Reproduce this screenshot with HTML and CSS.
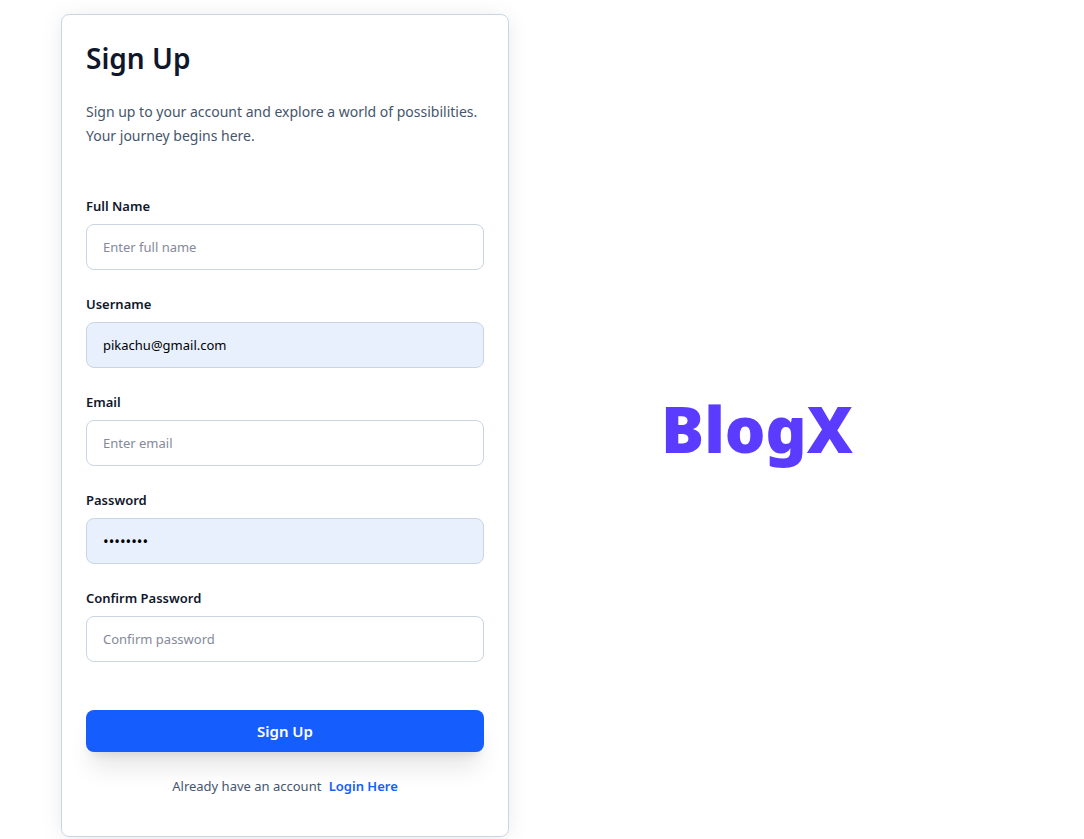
FILE: index.html
```html
<!DOCTYPE html>
<html lang="en">
<head>
<meta charset="utf-8">
<meta name="viewport" content="width=device-width, initial-scale=1">
<title>BlogX – Sign Up</title>
<link rel="stylesheet" href="styles.css">
</head>
<body>
<main class="page">
  <section class="card">
    <form class="form">
      <header class="intro">
        <h1 class="title">Sign Up</h1>
        <p class="lead">Sign up to your account and explore a world of possibilities. Your journey begins here.</p>
      </header>
      <div class="fields">
        <div class="field">
          <label class="label" for="fullname">Full Name</label>
          <input class="input" id="fullname" type="text" placeholder="Enter full name">
        </div>
        <div class="field">
          <label class="label" for="username">Username</label>
          <input class="input filled" id="username" type="text" value="pikachu@gmail.com">
        </div>
        <div class="field">
          <label class="label" for="email">Email</label>
          <input class="input" id="email" type="email" placeholder="Enter email">
        </div>
        <div class="field">
          <label class="label" for="password">Password</label>
          <input class="input filled masked" id="password" type="password" value="password">
        </div>
        <div class="field">
          <label class="label" for="confirm">Confirm Password</label>
          <input class="input" id="confirm" type="password" placeholder="Confirm password">
        </div>
      </div>
      <button class="submit" type="button">Sign Up</button>
      <p class="switch">Already have an account <a class="link" href="#">Login Here</a></p>
    </form>
  </section>
  <div class="brand">BlogX</div>
</main>
</body>
</html>
```
FILE: styles.css
```css
* { box-sizing: border-box; margin: 0; }

body {
  background: #fff;
  font-family: "Noto Sans", "Open Sans", sans-serif;
  color: #0f172b;
}

.page {
  display: grid;
  grid-template-columns: 1fr 1fr;
  align-items: center;
  gap: 24px;
  max-width: 1152px;
  padding: 14px 103px 2px 61px;
}

.card {
  padding: 24px;
  border: 1px solid #cad5e2;
  border-radius: 8px;
  box-shadow: 0 2px 22px -4px rgba(93, 96, 127, 0.2);
}

.title {
  font-size: 28px;
  line-height: 38px;
  font-weight: 600;
}

.lead {
  margin-top: 23px;
  font-size: 14px;
  line-height: 24px;
  color: #45556c;
}

.fields {
  display: grid;
  gap: 24px;
  margin-top: 48px;
}

.label {
  display: block;
  margin-bottom: 8px;
  font-size: 13px;
  line-height: 20px;
  font-weight: 600;
}

.input {
  display: block;
  width: 100%;
  height: 46px;
  padding: 0 16px;
  border: 1px solid #cad5e2;
  border-radius: 8px;
  background: #fff;
  font-family: inherit;
  font-size: 13px;
  color: #000;
}

.input::placeholder { color: #85899a; }

.filled { background: #e8f0fe; }

.masked { font-size: 15px; }

.submit {
  display: block;
  width: 100%;
  height: 42px;
  margin-top: 48px;
  border: 0;
  border-radius: 8px;
  background: #155dfc;
  box-shadow: 0 20px 25px -5px rgba(0, 0, 0, 0.1), 0 8px 10px -6px rgba(0, 0, 0, 0.1);
  font-family: inherit;
  font-size: 15px;
  font-weight: 600;
  color: #fff;
}

.switch {
  margin: 24px 0 16px;
  text-align: center;
  font-size: 13px;
  line-height: 20px;
  color: #45556c;
}

.link {
  margin-left: 4px;
  font-weight: 600;
  color: #155dfc;
  text-decoration: none;
}

.brand {
  padding-top: 6px;
  text-align: center;
  font-size: 64px;
  line-height: 88px;
  font-weight: 900;
  color: #5b3bff;
}
```
